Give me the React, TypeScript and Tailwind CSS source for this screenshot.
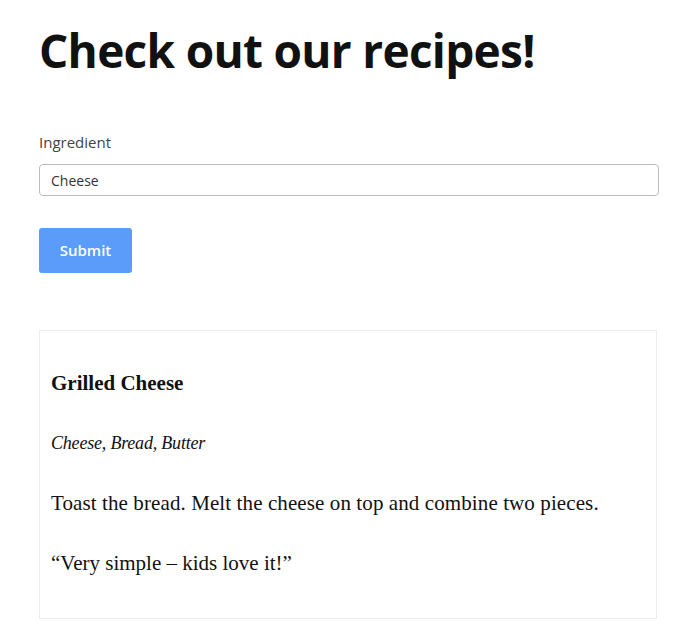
import React from 'react';

const App: React.FC = () => {
  return (
    <div className="min-h-screen bg-white px-[39px] pt-[18px] font-['Open_Sans',sans-serif]">
      <h1 className="text-[46px] font-bold leading-[64px] tracking-[-0.7px] text-[#111]">
        Check out our recipes!
      </h1>

      <form className="mt-[50px]" onSubmit={(e) => e.preventDefault()}>
        <label className="block text-[15px] leading-[20px] text-[#444]">Ingredient</label>
        <input
          type="text"
          defaultValue="Cheese"
          className="mt-[12px] block h-[32px] w-[620px] rounded-[4px] border border-[#bdbdbd] px-[11px] text-[14px] text-[#333] outline-none"
        />
        <button
          type="submit"
          className="mt-[32px] h-[45px] w-[93px] rounded-[3px] bg-[#5b9cfb] text-[15px] font-semibold text-white"
        >
          Submit
        </button>
      </form>

      <div className="mt-[57px] flex w-[618px] flex-col gap-[32px] border border-[#eeeeee] px-[11px] pt-[38px] pb-[41px] font-['Liberation_Serif',serif] text-[#111]">
        <h2 className="text-[21px] font-bold leading-[28px]">Grilled Cheese</h2>
        <p className="text-[18px] italic leading-[28px] tracking-[-0.2px]">Cheese, Bread, Butter</p>
        <p className="text-[21px] leading-[28px] tracking-[0.1px]">Toast the bread. Melt the cheese on top and combine two pieces.</p>
        <p className="text-[21px] leading-[28px]">“Very simple – kids love it!”</p>
      </div>
    </div>
  );
};

export default App;
